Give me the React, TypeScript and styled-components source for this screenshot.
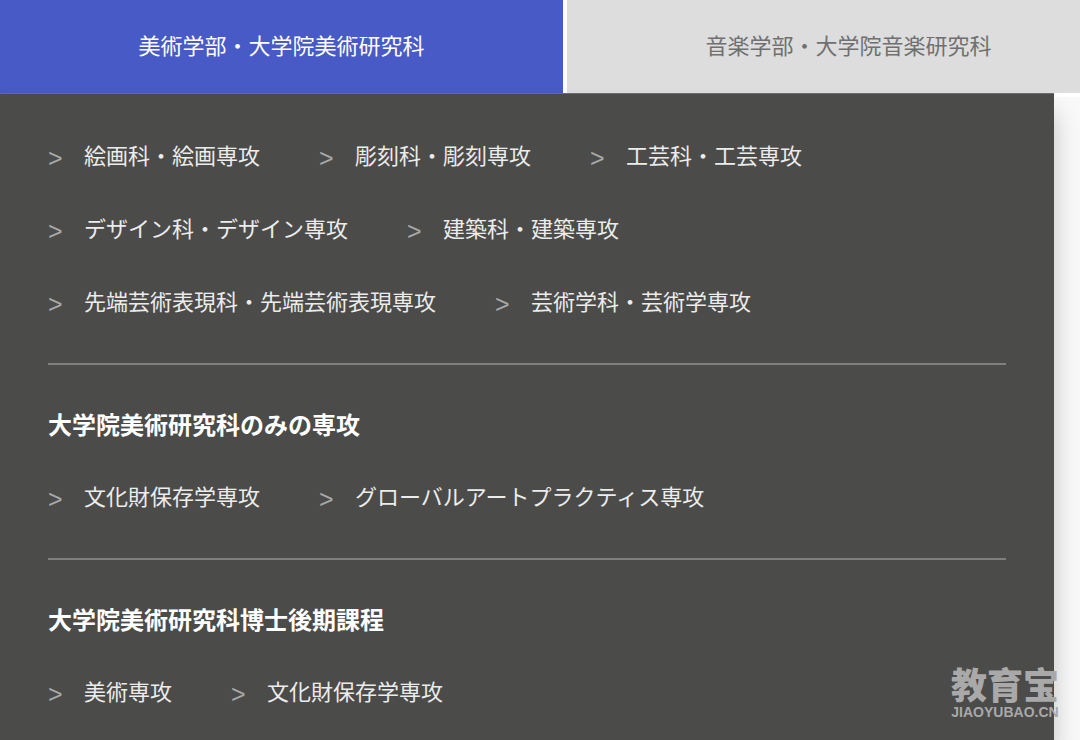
import React from "react";
import styled, { createGlobalStyle } from "styled-components";

const GlobalStyle = createGlobalStyle`
  * { box-sizing: border-box; }
  body {
    margin: 0;
    background: #f9f9f9;
    font-family: "Noto Sans CJK JP", sans-serif;
    overflow: hidden;
  }
`;

const Page = styled.main`
  position: relative;
  display: flex;
  flex-direction: column;
  min-height: 100vh;
  overflow: hidden;
`;

const Tabs = styled.nav`
  display: flex;
  gap: 4px;
  background: #fff;
  border-bottom: 4px solid #fff;
`;

const Tab = styled.button<{ $active?: boolean }>`
  flex: 0 0 calc(50% + 23px);
  padding: 0 0 4px;
  border: 0;
  background: ${(p) => (p.$active ? "#485ac6" : "#dddddd")};
  color: ${(p) => (p.$active ? "#fff" : "#707070")};
  font: inherit;
  font-size: 22px;
  line-height: 89px;
  cursor: pointer;
`;

const Panel = styled.div`
  flex: 1;
  margin-top: -4px;
  margin-right: 26px;
  padding: 24px 48px 0;
  background: #4b4b49;
  border-top: 1px solid #6c6c6a;
  box-shadow: 0 20px 24px rgba(0, 0, 0, 0.22);
`;

const Section = styled.section`
  & + & {
    margin-top: 26px;
    border-top: 2px solid #80807e;
    padding-top: 35px;
  }
`;

const Heading = styled.h2`
  margin: 0 0 11px;
  color: #fff;
  font-size: 24px;
  line-height: 48px;
  font-weight: 700;
`;

const Row = styled.ul`
  display: flex;
  gap: 59px;
  margin: 0;
  padding: 0;
  list-style: none;
`;

const Item = styled.a`
  display: flex;
  color: #ececec;
  font-size: 22px;
  line-height: 73px;
  white-space: nowrap;
  text-decoration: none;

  &::before {
    content: ">";
    width: 36px;
    padding-top: 7px;
    color: #a8a8a8;
    font-family: "Liberation Sans", sans-serif;
    font-size: 25px;
    line-height: 66px;
  }
`;

const Watermark = styled.div`
  position: absolute;
  right: 21px;
  bottom: 20px;
  display: flex;
  flex-direction: column;
  align-items: center;
  color: #a9a9a9;
  font-weight: 700;
  pointer-events: none;
`;

const WatermarkName = styled.span`
  font-family: "Noto Sans CJK SC", sans-serif;
  font-size: 36px;
  font-weight: 900;
  line-height: 42px;
`;

const WatermarkSite = styled.span`
  font-family: "Liberation Sans", sans-serif;
  font-size: 14px;
  line-height: 16px;
`;

const sections: { title?: string; rows: string[][] }[] = [
  {
    rows: [
      ["絵画科・絵画専攻", "彫刻科・彫刻専攻", "工芸科・工芸専攻"],
      ["デザイン科・デザイン専攻", "建築科・建築専攻"],
      ["先端芸術表現科・先端芸術表現専攻", "芸術学科・芸術学専攻"],
    ],
  },
  {
    title: "大学院美術研究科のみの専攻",
    rows: [["文化財保存学専攻", "グローバルアートプラクティス専攻"]],
  },
  {
    title: "大学院美術研究科博士後期課程",
    rows: [["美術専攻", "文化財保存学専攻"]],
  },
];

export default function App() {
  return (
    <Page>
      <GlobalStyle />
      <Tabs>
        <Tab type="button" $active>美術学部・大学院美術研究科</Tab>
        <Tab type="button">音楽学部・大学院音楽研究科</Tab>
      </Tabs>
      <Panel>
        {sections.map((section, i) => (
          <Section key={i}>
            {section.title && <Heading>{section.title}</Heading>}
            {section.rows.map((row, j) => (
              <Row key={j}>
                {row.map((name) => (
                  <li key={name}>
                    <Item href="#">{name}</Item>
                  </li>
                ))}
              </Row>
            ))}
          </Section>
        ))}
      </Panel>
      <Watermark>
        <WatermarkName>教育宝</WatermarkName>
        <WatermarkSite>JIAOYUBAO.CN</WatermarkSite>
      </Watermark>
    </Page>
  );
}
